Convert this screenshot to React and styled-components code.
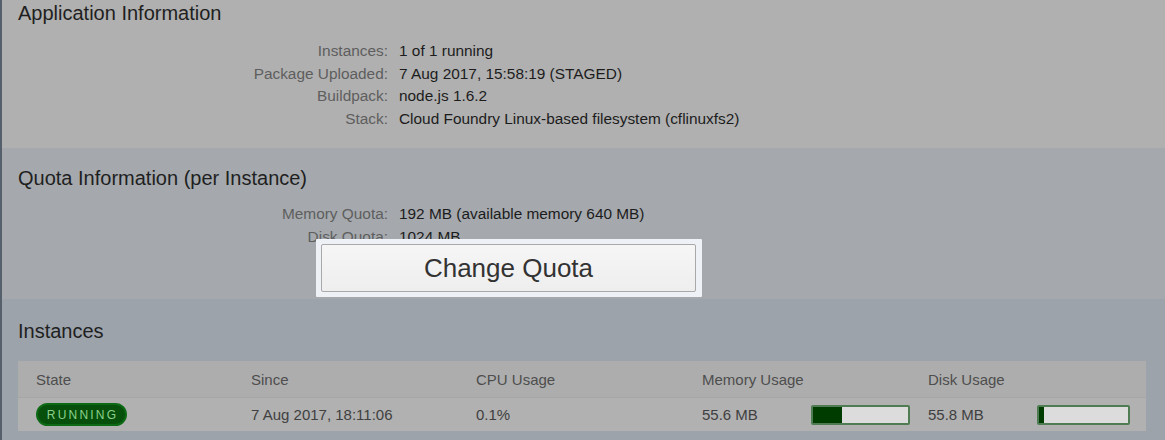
import React from "react";
import styled, { createGlobalStyle } from "styled-components";

const Global = createGlobalStyle`
  html, body { margin: 0; padding: 0; background: #9ca3ab; }
  body { font-family: "Liberation Sans", Arial, sans-serif; }
  * { box-sizing: border-box; }
`;

const Page = styled.div`
  width: 1165px;
  height: 440px;
  overflow: hidden;
  border-left: 2px solid #56606c;
  display: flex;
  flex-direction: column;
`;

const Section = styled.section`
  position: relative;
  background: ${(p) => p.$bg};
  padding: ${(p) => p.$pad};
`;

const Title = styled.h2`
  margin: 0;
  font-size: 20px;
  line-height: 24px;
  font-weight: normal;
  color: #1f1f1f;
`;

const KV = styled.dl`
  margin: ${(p) => p.$mt}px 0 0;
  display: grid;
  grid-template-columns: 370px 1fr;
  column-gap: 11px;
  font-size: 15.4px;
  line-height: 22.5px;
`;

const Key = styled.dt`
  margin: 0;
  text-align: right;
  color: #5e5e5e;
  white-space: nowrap;
`;

const Val = styled.dd`
  margin: 0;
  color: #1c1c1c;
  white-space: nowrap;
`;

const Spotlight = styled.div`
  position: absolute;
  left: 314px;
  top: 91px;
  width: 386px;
  height: 58px;
  padding: 5px 6px 5px 5px;
  background: #eef1f5;
  border-radius: 1px;
`;

const QuotaButton = styled.button`
  width: 100%;
  height: 100%;
  border: 1px solid #a9a9a9;
  border-radius: 2px;
  background: linear-gradient(#f6f6f6, #eeeeee);
  font-family: "Liberation Sans", Arial, sans-serif;
  font-size: 26px;
  color: #333;
  padding: 0;
  cursor: pointer;
`;

const Table = styled.div`
  margin-top: 18px;
  width: 1128px;
  display: grid;
  grid-template-columns: 215px 225px 226px 226px 1fr;
  font-size: 15px;
`;

const Cell = styled.div`
  display: flex;
  align-items: center;
  padding-left: 18px;
  height: ${(p) => (p.$head ? 36 : 34)}px;
  background: ${(p) => (p.$head ? "#adadad" : "#b1b1b1")};
  color: ${(p) => (p.$head ? "#4e4e4e" : "#404040")};
  border-top: ${(p) => (p.$head ? "none" : "1px solid #a6a6a6")};
  white-space: nowrap;
`;

const Badge = styled.span`
  display: inline-flex;
  align-items: center;
  justify-content: center;
  width: 91px;
  height: 23px;
  border-radius: 12px;
  background: #06500b;
  border: 2px solid #0d6a14;
  color: #8ccf8c;
  font-size: 12px;
  letter-spacing: 2.2px;
  padding-left: 2px;
`;

const Amount = styled.span`
  width: 109px;
  flex: none;
`;

const Bar = styled.div`
  width: ${(p) => p.$w}px;
  height: 20px;
  border: 2px solid #4f7c53;
  border-radius: 2px;
  background: #dcdcdc;
  display: flex;
`;

const Fill = styled.div`
  height: 100%;
  background: #003c00;
`;

export default function App() {
  return (
    <>
      <Global />
      <Page>
        <Section $bg="#b0b0b0" $pad="1px 16px 18px">
          <Title>Application Information</Title>
          <KV $mt={15}>
            <Key>Instances:</Key>
            <Val>1 of 1 running</Val>
            <Key>Package Uploaded:</Key>
            <Val>7 Aug 2017, 15:58:19 (STAGED)</Val>
            <Key>Buildpack:</Key>
            <Val>node.js 1.6.2</Val>
            <Key>Stack:</Key>
            <Val>Cloud Foundry Linux-based filesystem (cflinuxfs2)</Val>
          </KV>
        </Section>
        <Section $bg="#a5a9ad" $pad="18px 16px 51px">
          <Title>Quota Information (per Instance)</Title>
          <KV $mt={13}>
            <Key>Memory Quota:</Key>
            <Val>192 MB (available memory 640 MB)</Val>
            <Key>Disk Quota:</Key>
            <Val>1024 MB</Val>
          </KV>
          <Spotlight>
            <QuotaButton>Change Quota</QuotaButton>
          </Spotlight>
        </Section>
        <Section $bg="#9ca3ab" $pad="20px 16px 8px" style={{ flex: 1 }}>
          <Title>Instances</Title>
          <Table>
            <Cell $head>State</Cell>
            <Cell $head>Since</Cell>
            <Cell $head>CPU Usage</Cell>
            <Cell $head>Memory Usage</Cell>
            <Cell $head>Disk Usage</Cell>
            <Cell>
              <Badge>RUNNING</Badge>
            </Cell>
            <Cell>7 Aug 2017, 18:11:06</Cell>
            <Cell>0.1%</Cell>
            <Cell>
              <Amount>55.6 MB</Amount>
              <Bar $w={101}>
                <Fill style={{ width: "30%" }} />
              </Bar>
            </Cell>
            <Cell>
              <Amount>55.8 MB</Amount>
              <Bar $w={93}>
                <Fill style={{ width: "6%" }} />
              </Bar>
            </Cell>
          </Table>
        </Section>
      </Page>
    </>
  );
}
